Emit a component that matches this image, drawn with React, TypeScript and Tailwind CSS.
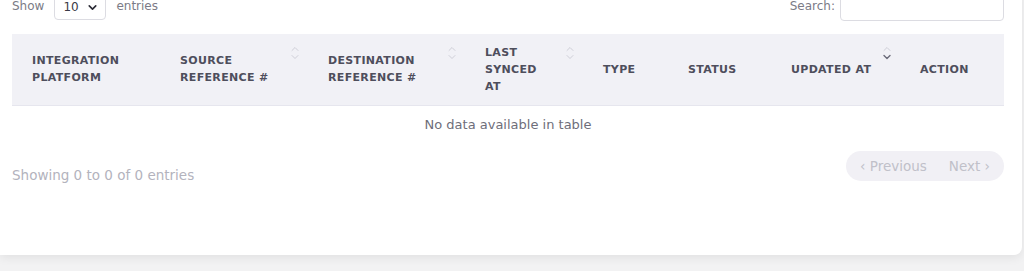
import { ChevronDown } from "lucide-react";

const cols = [
  { label: ["INTEGRATION", "PLATFORM"], w: "w-[148px]", sort: "" },
  { label: ["SOURCE", "REFERENCE #"], w: "w-[148px]", sort: "none" },
  { label: ["DESTINATION", "REFERENCE #"], w: "w-[157px]", sort: "none" },
  { label: ["LAST", "SYNCED", "AT"], w: "w-[118px]", sort: "none" },
  { label: ["TYPE"], w: "w-[85px]", sort: "" },
  { label: ["STATUS"], w: "w-[103px]", sort: "" },
  { label: ["UPDATED AT"], w: "w-[129px]", sort: "desc" },
  { label: ["ACTION"], w: "w-[104px]", sort: "" },
];

const SortIcon = ({ dir }: { dir: string }) => (
  <svg
    className="absolute right-[8px] top-[11px]"
    width="10"
    height="16"
    viewBox="0 0 10 16"
    fill="none"
    strokeLinecap="round"
    strokeLinejoin="round"
  >
    <path d="M2 5.5 L5 2.5 L8 5.5" stroke="#cfcfd8" strokeWidth="1" />
    <path
      d="M2 10.5 L5 13.5 L8 10.5"
      stroke={dir === "desc" ? "#6b6b7a" : "#cfcfd8"}
      strokeWidth={dir === "desc" ? 1.4 : 1}
    />
  </svg>
);

export default function App() {
  return (
    <div
      className="h-[271px] overflow-hidden bg-[#f2f2f3]"
      style={{ fontFamily: '"DejaVu Sans", "Noto Sans", sans-serif' }}
    >
      <div className="mt-[-9px] mr-[2px] rounded-br-lg bg-white pl-3 pr-[18px] pb-[72px] shadow-[0_3px_10px_rgba(0,0,0,0.07)]">
        <div className="flex items-center justify-between">
          <div className="flex items-center text-[12px] text-[#7b7b86]">
            <span>Show</span>
            <div className="mx-[10px] mt-[2px] flex h-[26px] w-[52px] items-center justify-between rounded-[4px] border border-[#dcdce2] pl-[8px] pr-[6px] text-[#3a3a46]">
              <span>10</span>
              <ChevronDown size={13} strokeWidth={3} className="text-[#2c2c36]" />
            </div>
            <span>entries</span>
          </div>
          <div className="flex items-center text-[12px] text-[#7b7b86]">
            <span className="mr-[5px]">Search:</span>
            <div className="h-[30px] w-[164px] rounded-[4px] border border-[#dcdce2]" />
          </div>
        </div>

        <table className="mt-[13px] w-[992px] table-fixed border-collapse">
          <thead>
            <tr className="h-[71px] border-b border-[#e6e6ee] bg-[#f1f1f6]">
              {cols.map((c, i) => (
                <th
                  key={i}
                  className={`${c.w} relative pl-5 pr-6 text-left align-middle text-[11px] font-bold leading-[17px] tracking-[0.03em] text-[#4e4e5c]`}
                >
                  {c.label.map((l, j) => (
                    <div key={j} className="whitespace-nowrap">
                      {l}
                    </div>
                  ))}
                  {c.sort && <SortIcon dir={c.sort} />}
                </th>
              ))}
            </tr>
          </thead>
          <tbody>
            <tr>
              <td
                colSpan={8}
                className="h-[39px] text-center text-[13px] text-[#6e6e7a]"
              >
                No data available in table
              </td>
            </tr>
          </tbody>
        </table>

        <div className="mt-[7px] flex items-start justify-between">
          <div className="pt-[16px] text-[13.5px] leading-[16px] text-[#b3b3bd]">
            Showing 0 to 0 of 0 entries
          </div>
          <div className="flex h-[30px] items-center gap-[22px] rounded-full bg-[#f1f0f5] px-[14px] text-[13.5px] text-[#c0c0c9]">
            <span>‹ Previous</span>
            <span>Next ›</span>
          </div>
        </div>
      </div>
    </div>
  );
}
